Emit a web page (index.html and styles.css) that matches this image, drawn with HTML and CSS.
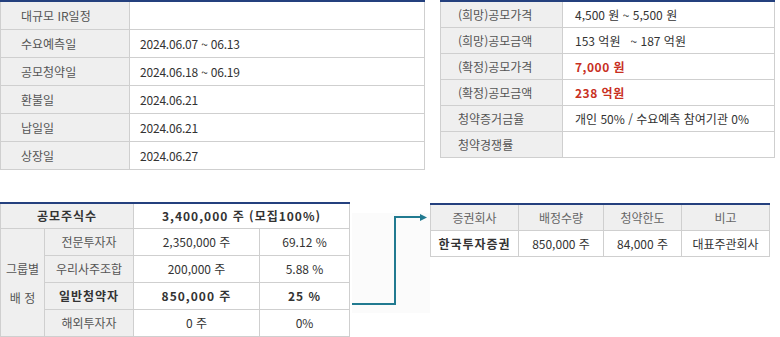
FILE: index.html
```html
<!DOCTYPE html>
<html lang="ko">
<head>
<meta charset="utf-8">
<title>공모 일정</title>
<link rel="stylesheet" href="styles.css">
</head>
<body>
<div class="top">
  <table class="tbl sched">
    <colgroup><col class="c-lbl"><col></colgroup>
    <tr><th>대규모 IR일정</th><td></td></tr>
    <tr><th>수요예측일</th><td>2024.06.07 ~ 06.13</td></tr>
    <tr><th>공모청약일</th><td>2024.06.18 ~ 06.19</td></tr>
    <tr><th>환불일</th><td>2024.06.21</td></tr>
    <tr><th>납일일</th><td>2024.06.21</td></tr>
    <tr><th>상장일</th><td>2024.06.27</td></tr>
  </table>
  <table class="tbl price">
    <colgroup><col class="c-lbl2"><col></colgroup>
    <tr><th>(희망)공모가격</th><td>4,500 원 ~ 5,500 원</td></tr>
    <tr><th>(희망)공모금액</th><td>153 억원 &nbsp; ~ 187 억원</td></tr>
    <tr><th>(확정)공모가격</th><td class="red">7,000 원</td></tr>
    <tr><th>(확정)공모금액</th><td class="red">238 억원</td></tr>
    <tr><th>청약증거금율</th><td>개인 50% / 수요예측 참여기관 0%</td></tr>
    <tr><th>청약경쟁률</th><td></td></tr>
  </table>
</div>
<div class="bottom">
  <table class="tbl alloc">
    <colgroup><col class="a1"><col class="a2"><col class="a3"><col></colgroup>
    <tr class="head"><th colspan="2" class="b">공모주식수</th><td colspan="2" class="b">3,400,000 주 (모집100%)</td></tr>
    <tr><th rowspan="4" class="grp">그룹별<br>배 정</th><th>전문투자자</th><td>2,350,000 주</td><td>69.12 %</td></tr>
    <tr><th>우리사주조합</th><td>200,000 주</td><td>5.88 %</td></tr>
    <tr><th class="b">일반청약자</th><td class="b">850,000 주</td><td class="b">25 %</td></tr>
    <tr><th>해외투자자</th><td>0 주</td><td>0%</td></tr>
  </table>
  <svg class="arrow" width="80" height="120" viewBox="0 0 80 120" aria-hidden="true">
    <rect x="2" y="11" width="78" height="100" fill="#fbfbfb"/>
    <path d="M2 102 H45 V15 H71" fill="none" stroke="#217a90" stroke-width="2"/>
    <polygon points="70,12 77,15.5 70,19" fill="#217a90"/>
  </svg>
  <table class="tbl broker">
    <colgroup><col class="b1"><col class="b2"><col class="b3"><col></colgroup>
    <tr class="head"><th>증권회사</th><th>배정수량</th><th>청약한도</th><th>비고</th></tr>
    <tr><td class="b">한국투자증권</td><td>850,000 주</td><td>84,000 주</td><td>대표주관회사</td></tr>
  </table>
</div>
</body>
</html>
```
FILE: styles.css
```css
html, body {
  margin: 0;
  padding: 0;
  background: #ffffff;
}
body {
  font-family: "Noto Sans CJK KR", "Noto Sans", sans-serif;
  font-size: 12px;
  color: #333333;
}
.top {
  display: flex;
  align-items: flex-start;
  gap: 15px;
}
.tbl {
  border-collapse: collapse;
  table-layout: fixed;
  border-top: 2px solid #24407e;
}
.tbl th,
.tbl td {
  border: 1px solid #cfcfcf;
  padding: 0;
  font-weight: normal;
  white-space: nowrap;
  line-height: 14px;
}
.tbl th {
  background: #efefef;
  color: #555555;
}
.sched {
  width: 425px;
}
.sched .c-lbl { width: 129px; }
.sched th, .sched td {
  height: 27px;
  text-align: left;
}
.sched th { padding-left: 20px; }
.sched td {
  padding-left: 10px;
  letter-spacing: -0.2px;
}
.price {
  width: 335px;
}
.price .c-lbl2 { width: 122px; }
.price th, .price td {
  height: 25px;
  text-align: left;
}
.price th { padding-left: 17px; }
.price td { padding-left: 12px; }
.price td.red {
  color: #c8301f;
  font-weight: bold;
  letter-spacing: 0.5px;
}
.bottom {
  display: flex;
  align-items: flex-start;
  margin-top: 32px;
}
.alloc {
  width: 350px;
}
.alloc .a1 { width: 44px; }
.alloc .a2 { width: 89px; }
.alloc .a3 { width: 126px; }
.alloc th, .alloc td {
  height: 26px;
  text-align: center;
}
.alloc .head th,
.alloc .head td { height: 24px; }
.alloc .grp {
  line-height: 29px;
}
.tbl .b {
  font-weight: bold;
  color: #333333;
  letter-spacing: 1px;
}
.arrow {
  display: block;
  flex: none;
}
.broker {
  width: 340px;
  margin-top: 1px;
}
.broker .b1 { width: 88px; }
.broker .b2 { width: 85px; }
.broker .b3 { width: 78px; }
.broker th, .broker td {
  height: 25px;
  text-align: center;
}
.broker th { color: #666666; }
```
